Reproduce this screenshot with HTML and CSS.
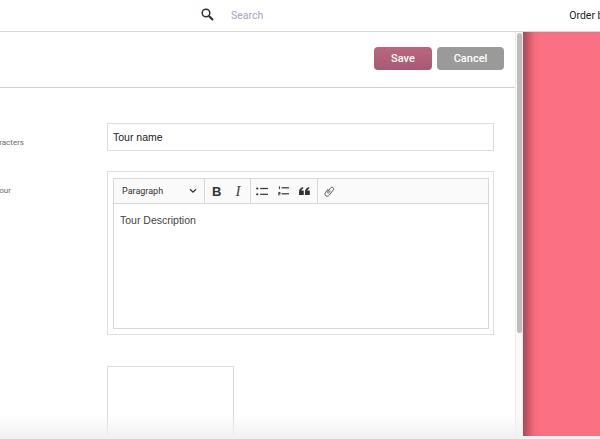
FILE: index.html
```html
<!DOCTYPE html>
<html lang="en">
<head>
<meta charset="utf-8">
<title>Edit tour</title>
<link rel="stylesheet" href="styles.css">
</head>
<body>
<div class="app">
  <header class="topbar">
    <svg class="search-icon" width="13" height="13" viewBox="0 0 13 13" fill="none" stroke="#3a2a2a"><circle cx="5" cy="5" r="3.8" stroke-width="1.5"/><path d="M7.9 7.9L12 12" stroke-width="2.1"/></svg>
    <span class="search-text">Search</span>
    <span class="order">Order by</span>
  </header>
  <div class="main">
    <section class="panel">
      <div class="actions">
        <button class="btn btn-save">Save</button>
        <button class="btn btn-cancel">Cancel</button>
      </div>
      <div class="form">
        <div class="row row-name">
          <div class="label"><span>Maximum 50 characters</span></div>
          <div class="input">Tour name</div>
        </div>
        <div class="row row-desc">
          <div class="label label-desc"><span>Describe your tour</span></div>
          <div class="editor-wrap">
            <div class="editor">
              <div class="toolbar">
                <div class="tb-group tb-para"><span>Paragraph</span>
                  <svg class="tb-icon" width="8" height="6" viewBox="0 0 8 6" fill="none" stroke="#333" stroke-width="1.3"><path d="M1 1.2L4 4.2L7 1.2"/></svg>
                </div>
                <div class="tb-group tb-format">
                  <span class="tb-bold">B</span>
                  <span class="tb-italic">I</span>
                </div>
                <div class="tb-group tb-lists">
                  <svg class="tb-icon" width="12" height="9" viewBox="0 0 12 9" fill="#333"><circle cx="1.2" cy="1.5" r="1.1"/><circle cx="1.2" cy="7.3" r="1.1"/><rect x="4.2" y=".9" width="7.8" height="1.2"/><rect x="4.2" y="6.7" width="7.8" height="1.2"/></svg>
                  <svg class="tb-icon" width="11" height="10" viewBox="0 0 11 10" fill="#333"><rect x=".9" y=".2" width=".9" height="3"/><path d="M.2 6h2.2v1.9H1v.6h1.4v.8H.2V7.2h1.4v-.5H.2z"/><rect x="3.6" y="1.2" width="7.4" height="1.2"/><rect x="3.6" y="7.2" width="7.4" height="1.2"/></svg>
                  <svg class="tb-icon" width="11" height="8" viewBox="0 0 11 8" fill="#333"><path d="M0 8V5C0 2.4 1.4.8 4.2 0v1.5C3 2 2.5 2.7 2.4 3.6H4.8V8zM6 8V5C6 2.4 7.4.8 10.2 0v1.5C9 2 8.5 2.7 8.4 3.6h2.4V8z"/></svg>
                </div>
                <div class="tb-group tb-link">
                  <svg class="tb-icon" width="10" height="11" viewBox="0 0 10 11" fill="none" stroke="#444" stroke-width=".9"><path d="M3 6.8L6.3 2.3C7 1.2 8.1.9 8.9 1.5C9.7 2.2 9.7 3.3 9 4.3L5.4 9C4.5 10.2 3 10.6 1.9 9.9C.8 9.1.7 7.7 1.5 6.5L4.2 3"/><path d="M4.2 7.6L6.4 4.8"/></svg>
                </div>
              </div>
              <div class="editor-body">Tour Description</div>
            </div>
          </div>
        </div>
        <div class="row row-image">
          <div class="label"></div>
          <div class="image-box"></div>
        </div>
      </div>
    </section>
    <div class="scrollbar"><div class="thumb"></div></div>
    <aside class="side"></aside>
  </div>
  <div class="fade"></div>
</div>
</body>
</html>
```
FILE: styles.css
```css
* { box-sizing: border-box; }
html, body { margin: 0; height: 100%; }
body { background: #fff; font-family: Roboto, "Liberation Sans", sans-serif; overflow: hidden; }
.app { position: relative; width: 600px; height: 439px; display: flex; flex-direction: column; overflow: hidden; }
.topbar { height: 32px; flex: none; border-bottom: 1px solid #d6d6d6; display: flex; align-items: center; padding-left: 201px; white-space: nowrap; }
.search-icon { flex: none; margin-top: -2px; }
.search-text { flex: none; margin-left: 17px; font-size: 10.5px; color: #a3a8bd; margin-top: -1px; }
.order { flex: none; margin-left: 306px; font-size: 10.5px; color: #2a1a1a; margin-top: -1px; }
.main { flex: none; display: flex; height: 404px; }
.panel { width: 515px; flex: none; overflow: hidden; }
.actions { height: 56px; border-bottom: 1px solid #d0d0d0; display: flex; justify-content: flex-end; align-items: flex-start; gap: 5px; padding: 15px 11px 0 0; }
.btn { height: 23px; border: 0; border-radius: 4px; color: #fff; font: 500 11px Roboto, "Liberation Sans", sans-serif; padding: 0 0 1px; }
.btn-save { width: 58px; background: linear-gradient(#bb6680, #a85a72); }
.btn-cancel { width: 67px; background: #9a9a9a; }
.form { padding-top: 35px; }
.row { display: flex; gap: 83px; }
.label { width: 24px; flex: none; display: flex; justify-content: flex-end; white-space: nowrap; font-size: 8px; color: #6a6a6a; padding-top: 15px; }
.label-desc { width: 11px; margin-right: 13px; }
.input { width: 387px; height: 28px; border: 1px solid #dcdcdc; font: 10.5px "Liberation Sans", sans-serif; color: #222; padding: 0 5px; display: flex; align-items: center; }
.row-desc { margin-top: 20px; }
.editor-wrap { width: 387px; height: 164px; border: 1px solid #dfdfdf; padding: 6px 4px 5px 5px; }
.editor { height: 151px; border: 1px solid #d8d8d8; display: flex; flex-direction: column; }
.toolbar { height: 25px; flex: none; background: #fafafa; border-bottom: 1px solid #d8d8d8; display: flex; }
.tb-group { display: flex; align-items: center; height: 100%; border-right: 1px solid #d8d8d8; }
.tb-icon { flex: none; }
.tb-para { width: 91px; padding: 0 7px 0 8px; justify-content: space-between; font-size: 9px; color: #333; }
.tb-format { width: 46px; padding-left: 7px; gap: 14px; }
.tb-bold { font: 700 13px "Liberation Sans", sans-serif; color: #333; }
.tb-italic { font: italic 15px "Liberation Serif", serif; color: #444; }
.tb-lists { width: 67px; padding-left: 5px; gap: 10px; }
.tb-link { border-right: 0; padding-left: 6px; }
.editor-body { padding: 10px 6px; font: 10.5px "Liberation Sans", sans-serif; color: #444; }
.row-image { margin-top: 31px; }
.image-box { width: 127px; height: 71px; border: 1px solid #dcdcdc; border-bottom: 0; }
.scrollbar { width: 8px; flex: none; background: #fafafa; border-left: 1px solid #ececec; border-right: 1px solid #ececec; padding: 1px 0 0 1px; }
.thumb { width: 5px; height: 300px; background: #bdbdbd; border-radius: 3px; }
.side { flex: 1; position: relative; z-index: 1; background: #fb7082; box-shadow: inset 14px 0 10px -8px rgba(90, 40, 50, .55); }
.fade { position: absolute; left: 0; right: 0; bottom: 0; height: 24px; background: linear-gradient(rgba(240,240,240,0), #f0f0f0); }
```
